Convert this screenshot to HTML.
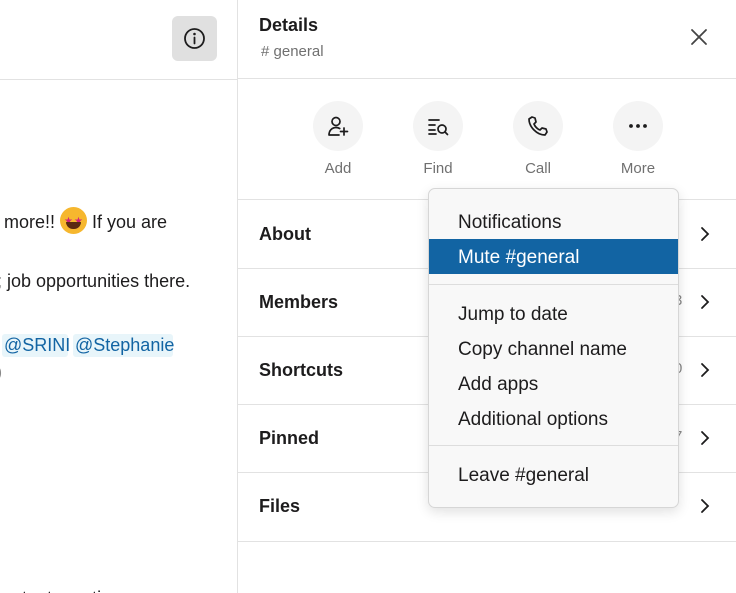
<!DOCTYPE html>
<html><head><meta charset="utf-8"><style>
*{margin:0;padding:0;box-sizing:border-box}
html,body{width:736px;height:593px;overflow:hidden}
body{background:#fff;font-family:"Liberation Sans",sans-serif;color:#1d1c1d;position:relative}
.a{position:absolute;white-space:nowrap}
.t{font-size:18px;line-height:20px}
.hl{position:absolute;height:1px;background:#e2e2e2}
.circ{position:absolute;width:50px;height:50px;border-radius:50%;background:#f4f4f4;top:101px}
.circ svg{position:absolute;left:13px;top:13px}
.lab{position:absolute;top:160px;width:80px;text-align:center;font-size:15px;color:#707070}
.row{position:absolute;left:259px;font-size:18px;font-weight:bold;line-height:22px}
.chev{position:absolute;left:699px}
.cnt{position:absolute;left:674px;font-size:15px;color:#888}
.menu{position:absolute;left:428px;top:188px;width:251px;height:320px;background:#f8f8f8;border:1px solid #d6d6d6;border-radius:7px;box-shadow:0 4px 12px rgba(0,0,0,.12);overflow:hidden}
.mi{position:absolute;left:29px;font-size:19px;line-height:22px;color:#1d1c1d}
.ms{position:absolute;left:0;right:0;height:1px;background:#ddd}
.men{position:absolute;top:334px;height:23px;background:#e8f5fa;color:#1264a3;font-size:18px;line-height:23px;border-radius:3px;padding:0 2px}
</style></head><body>
<div class="a" style="left:172px;top:16px;width:45px;height:45px;background:#e0e0e0;border-radius:6px">
<svg width="45" height="45" viewBox="0 0 45 45"><circle cx="22.5" cy="22.5" r="9.5" fill="none" stroke="#1d1c1d" stroke-width="1.8"/><circle cx="22.5" cy="18" r="1.3" fill="#1d1c1d"/><path d="M22.5 21.5v6" stroke="#1d1c1d" stroke-width="1.8" stroke-linecap="round"/></svg></div>
<div class="hl" style="left:0;top:79px;width:237px"></div>
<div class="a t" style="left:4px;top:207px">more!! <span style="display:inline-block;width:27px;height:27px;border-radius:50%;background:#f6b72e;vertical-align:-6px;position:relative"><span style="position:absolute;left:4px;top:5px;color:#d4237a;font-size:10px">★</span><span style="position:absolute;right:4px;top:5px;color:#d4237a;font-size:10px">★</span><span style="position:absolute;left:6px;top:15px;width:15px;height:7px;background:#5a2a12;border-radius:0 0 7px 7px"></span></span> If you are</div>
<div class="a t" style="left:-3px;top:271px">; job opportunities there.</div>
<div class="men a" style="left:2px;width:66px">@SRINI</div>
<div class="men a" style="left:73px;width:100px">@Stephanie</div>
<div class="a" style="left:-3px;top:364px;font-size:15px;color:#888">)</div>
<div class="a t" style="left:2px;top:588px">ontent creation process</div>
<div class="a" style="left:237px;top:0;width:1px;height:593px;background:#e2e2e2"></div>
<div class="a" style="left:259px;top:15px;font-size:18px;font-weight:bold">Details</div>
<div class="a" style="left:261px;top:43px;font-size:15px;color:#707070"># general</div>
<svg class="a" style="left:690px;top:28px" width="18" height="18" viewBox="0 0 18 18"><path d="M2 2L16 16M16 2L2 16" stroke="#444" stroke-width="1.8" stroke-linecap="round"/></svg>
<div class="hl" style="left:238px;top:78px;width:498px"></div>
<div class="circ" style="left:313px"><svg width="24" height="24" viewBox="0 0 24 24" fill="none" stroke="#1d1c1d" stroke-width="1.7" stroke-linecap="round"><circle cx="10" cy="7.5" r="4"/><path d="M3 21c0-4.5 3-7.5 7-7.5 1.5 0 2.7.4 3.7 1M3 21h10M18 14v7M14.5 17.5h7"/></svg></div>
<div class="circ" style="left:413px"><svg width="24" height="24" viewBox="0 0 24 24" fill="none" stroke="#1d1c1d" stroke-width="1.7" stroke-linecap="round"><path d="M3 6h10M3 11h6M3 16h6M3 20h7"/><circle cx="16" cy="15" r="4"/><path d="M19 18l2.5 2.5"/></svg></div>
<div class="circ" style="left:513px"><svg width="24" height="24" viewBox="0 0 24 24" fill="none" stroke="#1d1c1d" stroke-width="1.7" stroke-linejoin="round"><path d="M6 3l3 1 1 4-2 2c1 2.5 3.5 5 6 6l2-2 4 1 1 3-2 3c-8 0-16-8-16-16z"/></svg></div>
<div class="circ" style="left:613px"><svg width="24" height="24" viewBox="0 0 24 24" fill="#1d1c1d"><circle cx="5" cy="12" r="1.9"/><circle cx="12" cy="12" r="1.9"/><circle cx="19" cy="12" r="1.9"/></svg></div>
<div class="lab" style="left:298px">Add</div>
<div class="lab" style="left:398px">Find</div>
<div class="lab" style="left:498px">Call</div>
<div class="lab" style="left:598px">More</div>
<div class="hl" style="left:238px;top:199px;width:498px"></div>
<div class="row" style="top:223px">About</div>
<div class="hl" style="left:238px;top:268px;width:498px"></div>
<div class="row" style="top:291px">Members</div>
<div class="hl" style="left:238px;top:336px;width:498px"></div>
<div class="row" style="top:359px">Shortcuts</div>
<div class="hl" style="left:238px;top:404px;width:498px"></div>
<div class="row" style="top:427px">Pinned</div>
<div class="hl" style="left:238px;top:472px;width:498px"></div>
<div class="row" style="top:495px">Files</div>
<div class="hl" style="left:238px;top:541px;width:498px"></div>
<div class="cnt" style="top:292px">3</div><div class="cnt" style="top:360px">0</div><div class="cnt" style="top:428px">7</div>
<svg class="chev" style="top:225px" width="12" height="18" viewBox="0 0 12 18"><path d="M3 3l6 6-6 6" fill="none" stroke="#1d1c1d" stroke-width="1.8" stroke-linecap="round"/></svg>
<svg class="chev" style="top:293px" width="12" height="18" viewBox="0 0 12 18"><path d="M3 3l6 6-6 6" fill="none" stroke="#1d1c1d" stroke-width="1.8" stroke-linecap="round"/></svg>
<svg class="chev" style="top:361px" width="12" height="18" viewBox="0 0 12 18"><path d="M3 3l6 6-6 6" fill="none" stroke="#1d1c1d" stroke-width="1.8" stroke-linecap="round"/></svg>
<svg class="chev" style="top:429px" width="12" height="18" viewBox="0 0 12 18"><path d="M3 3l6 6-6 6" fill="none" stroke="#1d1c1d" stroke-width="1.8" stroke-linecap="round"/></svg>
<svg class="chev" style="top:497px" width="12" height="18" viewBox="0 0 12 18"><path d="M3 3l6 6-6 6" fill="none" stroke="#1d1c1d" stroke-width="1.8" stroke-linecap="round"/></svg>
<div class="menu">
<div class="mi" style="top:23px">Notifications</div>
<div style="position:absolute;left:0;right:0;top:50px;height:35px;background:#1264a3"></div>
<div class="mi" style="top:58px;color:#fff">Mute #general</div>
<div class="ms" style="top:95px"></div>
<div class="mi" style="top:115px">Jump to date</div>
<div class="mi" style="top:150px">Copy channel name</div>
<div class="mi" style="top:185px">Add apps</div>
<div class="mi" style="top:220px">Additional options</div>
<div class="ms" style="top:256px"></div>
<div class="mi" style="top:276px">Leave #general</div>
</div>
</body></html>
